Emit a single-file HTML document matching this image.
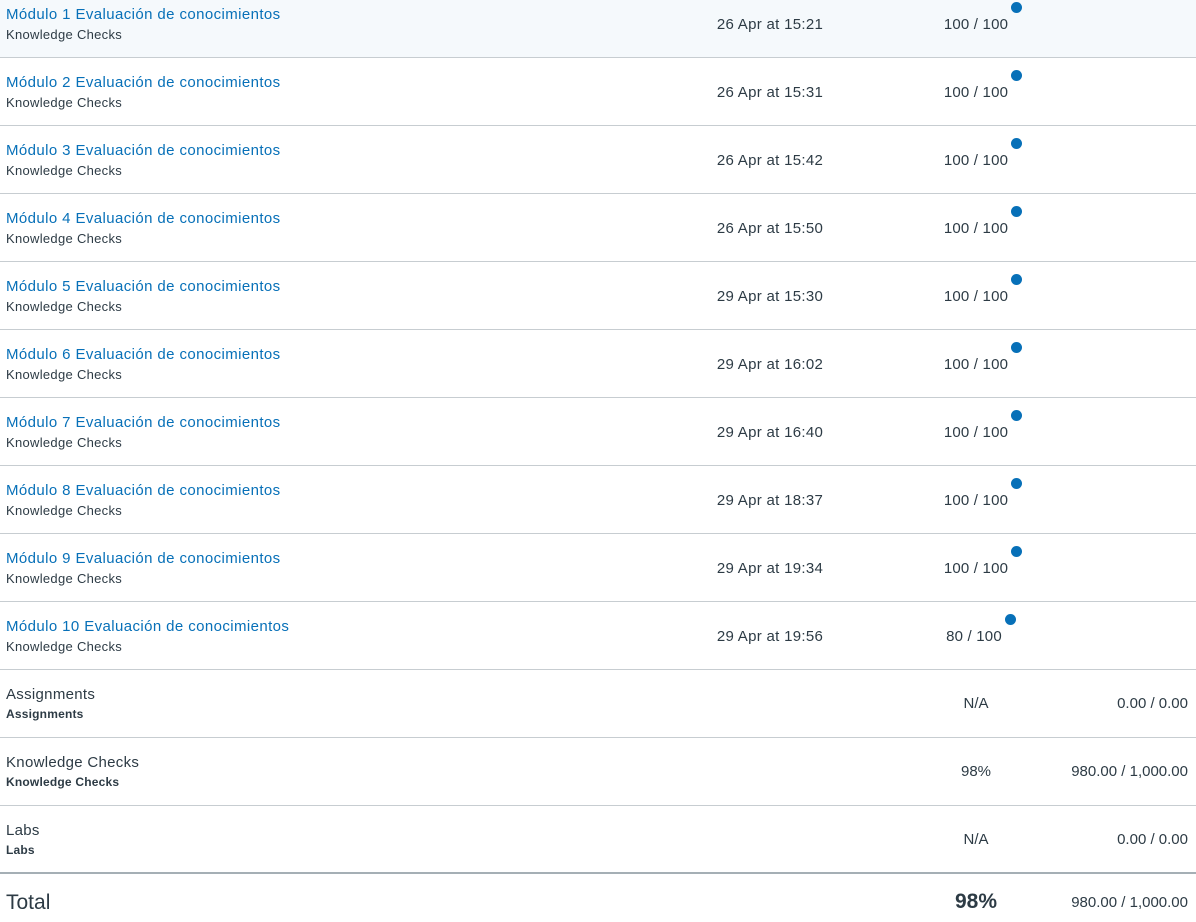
<!DOCTYPE html>
<html><head><meta charset="utf-8"><style>
body{margin:0;width:1196px;height:922px;overflow:hidden;background:#fff;font-family:"Liberation Sans",sans-serif;color:#2d3b45;position:relative}
.row{position:absolute;left:0;width:1196px;height:67px;border-bottom:1px solid #c7cdd1}
.t{position:absolute;left:6px;top:16px;font-size:15px;color:#0770b8;white-space:nowrap;letter-spacing:0.4px}
.s{position:absolute;left:6px;top:37px;font-size:13px;white-space:nowrap;letter-spacing:0.3px}
.d{position:absolute;left:660px;width:220px;text-align:center;top:26px;font-size:15px;letter-spacing:0.3px}
.g{position:absolute;left:876px;width:200px;text-align:center;top:26px;font-size:15px;letter-spacing:0.2px}
.g span{position:relative}
.g span i{position:absolute;right:-14px;top:-14px;width:11px;height:11px;border-radius:50%;background:#0770b8}
.c .t{color:#2d3b45;letter-spacing:0.3px}
.c .s{font-weight:bold;font-size:12px;letter-spacing:0.2px}
.v{position:absolute;left:876px;width:200px;text-align:center;top:25px;font-size:15px}
.r{position:absolute;right:8px;top:25px;font-size:15px}
</style></head><body>
<div class="row" style="top:-10px;background:#f5f9fc"><div class="t">Módulo 1 Evaluación de conocimientos</div><div class="s">Knowledge Checks</div><div class="d">26 Apr at 15:21</div><div class="g"><span>100 / 100<i></i></span></div></div>
<div class="row" style="top:58px"><div class="t">Módulo 2 Evaluación de conocimientos</div><div class="s">Knowledge Checks</div><div class="d">26 Apr at 15:31</div><div class="g"><span>100 / 100<i></i></span></div></div>
<div class="row" style="top:126px"><div class="t">Módulo 3 Evaluación de conocimientos</div><div class="s">Knowledge Checks</div><div class="d">26 Apr at 15:42</div><div class="g"><span>100 / 100<i></i></span></div></div>
<div class="row" style="top:194px"><div class="t">Módulo 4 Evaluación de conocimientos</div><div class="s">Knowledge Checks</div><div class="d">26 Apr at 15:50</div><div class="g"><span>100 / 100<i></i></span></div></div>
<div class="row" style="top:262px"><div class="t">Módulo 5 Evaluación de conocimientos</div><div class="s">Knowledge Checks</div><div class="d">29 Apr at 15:30</div><div class="g"><span>100 / 100<i></i></span></div></div>
<div class="row" style="top:330px"><div class="t">Módulo 6 Evaluación de conocimientos</div><div class="s">Knowledge Checks</div><div class="d">29 Apr at 16:02</div><div class="g"><span>100 / 100<i></i></span></div></div>
<div class="row" style="top:398px"><div class="t">Módulo 7 Evaluación de conocimientos</div><div class="s">Knowledge Checks</div><div class="d">29 Apr at 16:40</div><div class="g"><span>100 / 100<i></i></span></div></div>
<div class="row" style="top:466px"><div class="t">Módulo 8 Evaluación de conocimientos</div><div class="s">Knowledge Checks</div><div class="d">29 Apr at 18:37</div><div class="g"><span>100 / 100<i></i></span></div></div>
<div class="row" style="top:534px"><div class="t">Módulo 9 Evaluación de conocimientos</div><div class="s">Knowledge Checks</div><div class="d">29 Apr at 19:34</div><div class="g"><span>100 / 100<i></i></span></div></div>
<div class="row" style="top:602px"><div class="t">Módulo 10 Evaluación de conocimientos</div><div class="s">Knowledge Checks</div><div class="d">29 Apr at 19:56</div><div class="g" style="left:874px"><span>80 / 100<i></i></span></div></div>
<div class="row c" style="top:670px"><div class="t">Assignments</div><div class="s">Assignments</div><div class="v">N/A</div><div class="r">0.00 / 0.00</div></div>
<div class="row c" style="top:738px"><div class="t">Knowledge Checks</div><div class="s">Knowledge Checks</div><div class="v">98%</div><div class="r">980.00 / 1,000.00</div></div>
<div class="row c" style="top:806px;height:66px;border-bottom:2px solid #a5afb5"><div class="t">Labs</div><div class="s">Labs</div><div class="v">N/A</div><div class="r">0.00 / 0.00</div></div>
<div style="position:absolute;left:6px;top:891px;font-size:21px">Total</div>
<div style="position:absolute;left:876px;width:200px;text-align:center;top:890px;font-size:21px;font-weight:bold">98%</div>
<div style="position:absolute;right:8px;top:894px;font-size:15px">980.00 / 1,000.00</div>
</body></html>
